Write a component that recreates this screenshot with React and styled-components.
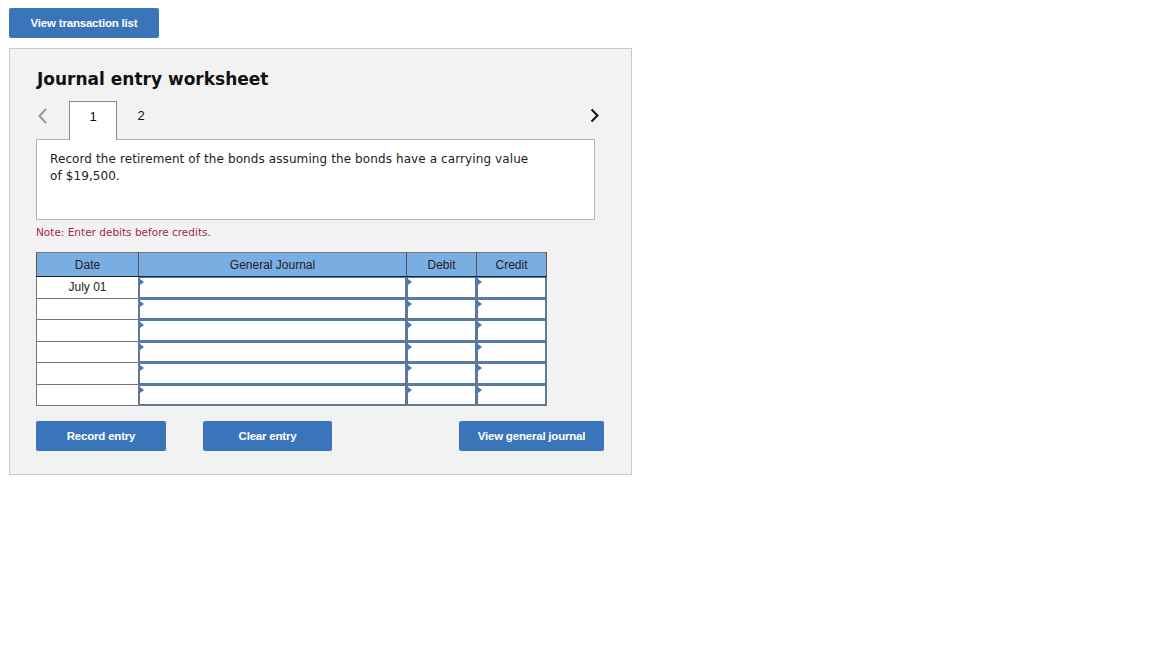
import React from "react";
import styled, { createGlobalStyle } from "styled-components";

const GlobalStyle = createGlobalStyle`
  html, body {
    margin: 0;
    padding: 0;
    background: #ffffff;
  }
  body {
    font-family: "Liberation Sans", Arial, sans-serif;
    color: #222;
  }
`;

const Page = styled.div`
  padding: 8px 9px;
  width: 623px;
`;

const Button = styled.button`
  display: inline-flex;
  align-items: center;
  justify-content: center;
  height: 30px;
  width: ${(p) => p.w}px;
  padding: 0;
  border: none;
  border-radius: 2px;
  background: #3a75b9;
  color: #fff;
  font-family: "Liberation Sans", Arial, sans-serif;
  font-weight: bold;
  font-size: 11.5px;
  letter-spacing: -0.2px;
  cursor: pointer;
`;

const Panel = styled.div`
  margin-top: 10px;
  background: #f2f2f2;
  border: 1px solid #c8c8c8;
  padding: 18px 27px 23px 26px;
`;

const Title = styled.h2`
  margin: 0;
  padding-left: 1px;
  font-family: "DejaVu Sans", Verdana, sans-serif;
  font-weight: bold;
  font-size: 17px;
  line-height: 24px;
  color: #111;
`;

const TabBar = styled.div`
  display: flex;
  align-items: flex-end;
  margin-top: 10px;
  height: 38px;
`;

const Chevron = styled.span`
  display: flex;
  align-items: center;
  justify-content: ${(p) => p.justify || "center"};
  width: ${(p) => p.w}px;
  height: 38px;
  box-sizing: border-box;
  padding-bottom: 9px;
  padding-left: ${(p) => p.pl || 0}px;
`;

const Tab = styled.div`
  position: relative;
  z-index: 1;
  width: 48px;
  height: ${(p) => (p.active ? 39 : 38)}px;
  box-sizing: border-box;
  display: flex;
  align-items: center;
  justify-content: center;
  padding-bottom: 9px;
  margin-bottom: ${(p) => (p.active ? -1 : 0)}px;
  background: ${(p) => (p.active ? "#fff" : "transparent")};
  border: ${(p) => (p.active ? "1px solid #8a8a8a" : "none")};
  border-bottom: none;
  font-family: "Liberation Sans", Arial, sans-serif;
  font-size: 13px;
  color: #111;
`;

const Spacer = styled.div`
  flex: 1;
`;

const Prompt = styled.div`
  width: 559px;
  height: 81px;
  box-sizing: border-box;
  background: #fff;
  border: 1px solid #b4b4b4;
  padding: 11px 13px;
  font-family: "DejaVu Sans", Verdana, sans-serif;
  font-size: 12px;
  letter-spacing: 0.1px;
  line-height: 17px;
  color: #222;
`;

const Note = styled.div`
  margin-top: 7px;
  font-family: "DejaVu Sans", Verdana, sans-serif;
  font-size: 10.5px;
  line-height: 11px;
  color: #a3264f;
`;

const Table = styled.table`
  margin-top: 14px;
  border-collapse: collapse;
  table-layout: fixed;
  width: 511px;
  background: #fff;
`;

const Th = styled.th`
  height: 23px;
  padding: 0;
  background: #7aade2;
  border: 1px solid #555;
  border-top-color: #777;
  border-bottom: 1px solid #222;
  font-family: "Liberation Sans", Arial, sans-serif;
  font-weight: normal;
  font-size: 12px;
  color: #222;
  text-align: center;
`;

const Td = styled.td`
  height: 20.5px;
  padding: 0;
  border: 1px solid #777;
  font-family: "Liberation Sans", Arial, sans-serif;
  font-size: 12px;
  color: #222;
  text-align: center;
  vertical-align: top;
  line-height: 20px;
`;

const Field = styled.div`
  position: relative;
  height: 20.5px;
  box-sizing: border-box;
  border: 1.5px solid #4a79b3;
  background: #fff;
  &::before {
    content: "";
    position: absolute;
    top: 1px;
    left: 0;
    border-left: 4px solid #3b7bcb;
    border-top: 3px solid transparent;
    border-bottom: 3px solid transparent;
  }
`;

const Actions = styled.div`
  display: flex;
  align-items: center;
  gap: 37px;
  margin-top: 15px;
`;

const rows = ["July 01", "", "", "", "", ""];

export default function App() {
  return (
    <>
      <GlobalStyle />
      <Page>
        <Button w={150}>View transaction list</Button>
        <Panel>
          <Title>Journal entry worksheet</Title>
          <TabBar>
            <Chevron w={33} justify="flex-start" pl={2}>
              <svg width="9" height="16" viewBox="0 0 9 16">
                <polyline points="8,1 1.5,8 8,15" fill="none" stroke="#9a9a9a" strokeWidth="2" />
              </svg>
            </Chevron>
            <Tab active>1</Tab>
            <Tab>2</Tab>
            <Spacer />
            <Chevron w={14} justify="flex-start">
              <svg width="9" height="15" viewBox="0 0 9 15">
                <polyline points="1.5,1.5 7.5,7.5 1.5,13.5" fill="none" stroke="#111" strokeWidth="2" />
              </svg>
            </Chevron>
          </TabBar>
          <Prompt>
            Record the retirement of the bonds assuming the bonds have a carrying value
            <br />
            of $19,500.
          </Prompt>
          <Note>Note: Enter debits before credits.</Note>
          <Table>
            <colgroup>
              <col style={{ width: 102 }} />
              <col style={{ width: 268 }} />
              <col style={{ width: 70 }} />
              <col style={{ width: 70 }} />
            </colgroup>
            <thead>
              <tr>
                <Th>Date</Th>
                <Th>General Journal</Th>
                <Th>Debit</Th>
                <Th>Credit</Th>
              </tr>
            </thead>
            <tbody>
              {rows.map((date, i) => (
                <tr key={i}>
                  <Td>{date}</Td>
                  <Td><Field /></Td>
                  <Td><Field /></Td>
                  <Td><Field /></Td>
                </tr>
              ))}
            </tbody>
          </Table>
          <Actions>
            <Button w={130}>Record entry</Button>
            <Button w={129}>Clear entry</Button>
            <Spacer />
            <Button w={145}>View general journal</Button>
          </Actions>
        </Panel>
      </Page>
    </>
  );
}
